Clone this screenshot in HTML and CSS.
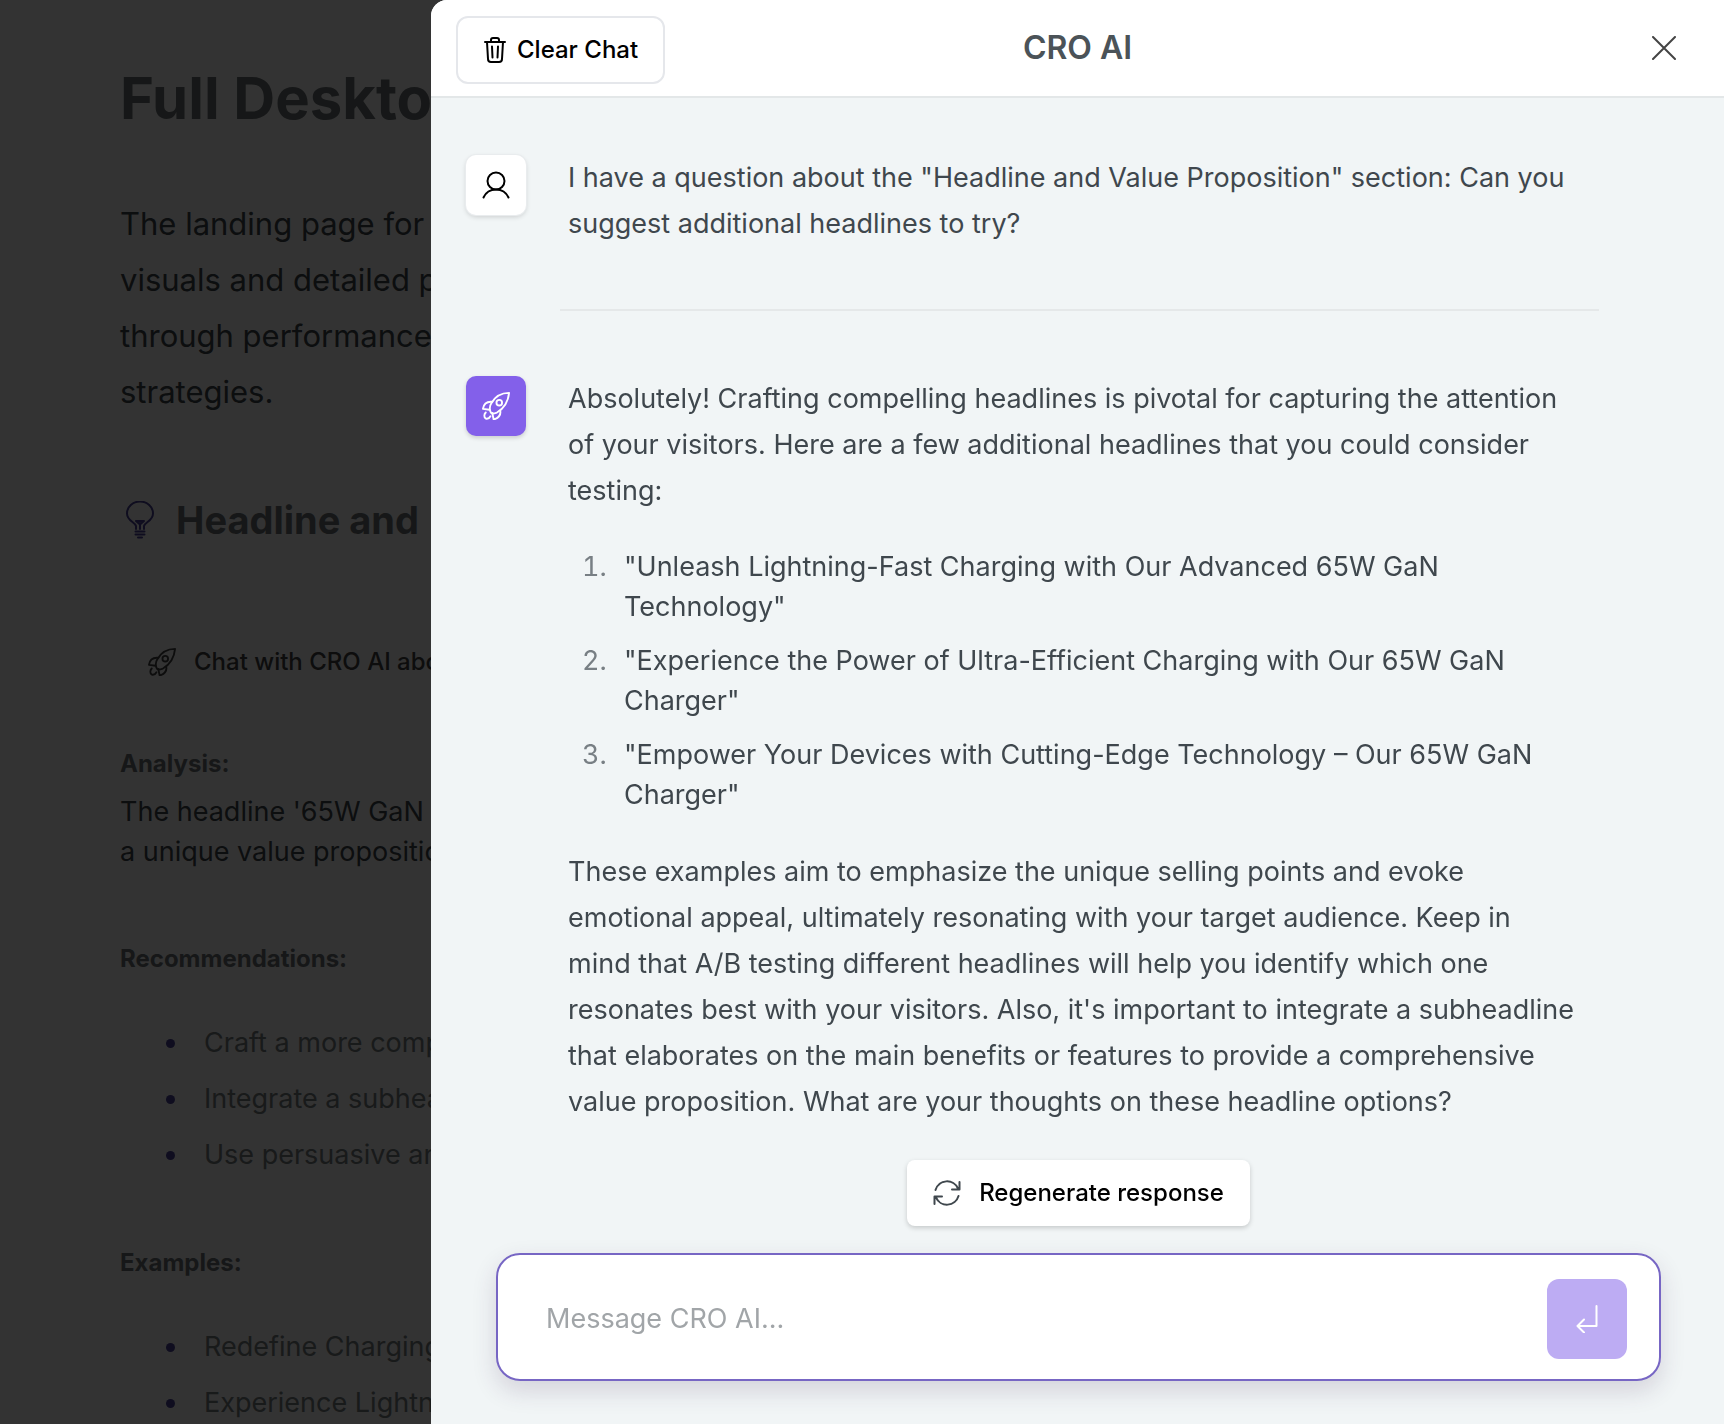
FILE: index.html
```html
<!DOCTYPE html>
<html lang="en">
<head>
<meta charset="utf-8">
<meta name="viewport" content="width=device-width, initial-scale=1">
<title>CRO AI</title>
<link rel="stylesheet" href="styles.css">
</head>
<body>
<svg class="sprite" aria-hidden="true">
  <symbol id="rocket" viewBox="1 1 30 30">
    <path d="M30 2C22 2 15 6 11 13c-2 3-2 6-1 9s4 2 7 1c7-4 12-11 13-21Z"/>
    <circle cx="19.500" cy="12.500" r="3"/>
    <path d="M12 11.500C7 11 3 13 2 19l7 1M20.500 21c1 5-2 8-7 9.500l-1.500-7M5 23c-2 2-2 5 0 6.500 2 .500 4-.500 5-2.500"/>
  </symbol>
</svg>

<main class="report">
  <h1 class="report-title">Full Desktop</h1>
  <p class="lead">The landing page for the<br>visuals and detailed product<br>through performance<br>strategies.</p>
  <h2 class="section-title">
    <svg class="bulb" viewBox="0 0 28 38" aria-hidden="true"><path d="M10 28v-3C9 21 1 20 1 12.500a13 12 0 0 1 26 0C27 20 19 21 18 25v3M10 20h8l-4 3.500zM14 22v6M9.500 30.500h9M9.500 33.500h9M12 36.500h4"/></svg>
    Headline and
  </h2>
  <button class="ask" type="button"><svg class="icon-md" aria-hidden="true"><use href="#rocket"/></svg>Chat with CRO AI about</button>
  <h3 class="label">Analysis:</h3>
  <p class="analysis">The headline '65W GaN<br>a unique value proposition</p>
  <h3 class="label">Recommendations:</h3>
  <ul class="points">
    <li>Craft a more compelling</li>
    <li>Integrate a subheadline</li>
    <li>Use persuasive and</li>
  </ul>
  <h3 class="label">Examples:</h3>
  <ul class="points">
    <li>Redefine Charging</li>
    <li>Experience Lightning</li>
  </ul>
</main>

<div class="overlay">
  <section class="panel" role="dialog" aria-labelledby="panel-title">
    <header class="panel-header">
      <button class="clear" type="button">
        <svg class="trash" viewBox="0 0 22 26" aria-hidden="true"><path d="M1 5h20M7 5V3q0-2 2-2h4q2 0 2 2v2M3 5l1 17q0 3 3 3h8q3 0 3-3l1-17M8 9.500l.500 11M14 9.500l-.500 11"/></svg>
        Clear Chat
      </button>
      <h2 class="panel-title" id="panel-title">CRO AI</h2>
      <button class="close" type="button" aria-label="Close"><svg viewBox="0 0 24 24" aria-hidden="true"><path d="M1 1l22 22M23 1L1 23"/></svg></button>
    </header>

    <div class="messages">
      <article class="message">
        <span class="avatar avatar-user"><svg viewBox="0 0 28 28" aria-hidden="true"><circle cx="14" cy="10" r="8.500"/><path d="M1.500 26.500C4 21 8.500 18.500 14 18.500S24 21 26.500 26.500"/></svg></span>
        <div class="text"><p>I have a question about the "Headline and Value Proposition" section: Can you suggest additional headlines to try?</p></div>
      </article>
      <hr class="divider">
      <article class="message">
        <span class="avatar avatar-ai"><svg aria-hidden="true"><use href="#rocket"/></svg></span>
        <div class="text">
          <p>Absolutely! Crafting compelling headlines is pivotal for capturing the attention of your visitors. Here are a few additional headlines that you could consider testing:</p>
          <ol>
            <li>"Unleash Lightning-Fast Charging with Our Advanced 65W GaN Technology"</li>
            <li>"Experience the Power of Ultra-Efficient Charging with Our 65W GaN Charger"</li>
            <li>"Empower Your Devices with Cutting-Edge Technology – Our 65W GaN Charger"</li>
          </ol>
          <p>These examples aim to emphasize the unique selling points and evoke emotional appeal, ultimately resonating with your target audience. Keep in mind&nbsp;that A/B testing different headlines will help you identify which one resonates best with your visitors. Also, it's important to integrate a subheadline that elaborates on the main benefits or features to provide a comprehensive value proposition. What are your thoughts on these headline options?</p>
        </div>
      </article>
    </div>

    <footer class="panel-footer">
      <button class="regenerate" type="button">
        <svg viewBox="0 0 28 28" aria-hidden="true"><path d="M2.500 11A12 12 0 0 1 25 9.500M26.500 3v7.500H19M25.500 17A12 12 0 0 1 3 18.500M1.500 25v-7.500H9"/></svg>
        Regenerate response
      </button>
      <form class="composer">
        <input class="field" type="text" placeholder="Message CRO AI..." aria-label="Message CRO AI">
        <button class="send" type="button" aria-label="Send"><svg viewBox="0 0 22 28" aria-hidden="true"><path d="M20.500 1v20H2M8 14.500L1.500 21 8 27.500"/></svg></button>
      </form>
    </footer>
  </section>
</div>
</body>
</html>
```
FILE: styles.css
```css
* { box-sizing: border-box; }
html, body { height: 100%; }
body {
  margin: 0;
  overflow: hidden;
  background: #fff;
  color: #3f474d;
  font-family: Inter, "Liberation Sans", sans-serif;
  font-size: 27px;
  line-height: 40px;
}
h1, h2, h3, p, ul, ol { margin: 0; padding: 0; }
button { border: 0; background: none; color: #000; font: inherit; font-weight: 500; }
svg { display: block; flex: none; fill: none; stroke: currentColor; stroke-width: 2; stroke-linecap: round; stroke-linejoin: round; }
.sprite { position: absolute; width: 0; height: 0; }

/* Report behind the dialog */
.report { padding: 60px 120px; white-space: nowrap; }
.report-title { color: #6f7678; font-size: 58px; line-height: 76px; }
.lead { margin-top: 60px; font-size: 31px; line-height: 56px; }
.section-title { display: flex; align-items: center; gap: 16px; margin-top: 76px; font-size: 38px; line-height: 48px; color: #6f7678; }
.bulb { width: 40px; height: 38px; color: #4a4499; }
.ask { display: flex; align-items: center; gap: 18px; margin-top: 90px; padding: 12px 28px; font-size: 24px; line-height: 32px; color: #444; }
.icon-md { width: 28px; height: 28px; }
.label { margin-top: 60px; font-size: 24px; line-height: 32px; color: #6f7678; }
.analysis { margin-top: 12px; }
.ask + .label { margin-top: 58px; }
.analysis + .label { margin-top: 71px; }
.points { margin-top: 40px; padding-left: 70px; line-height: 56px; color: #7a8084; }
.points li { padding-left: 14px; }
.points li::marker { color: #4a4499; }
.points + .label { margin-top: 64px; }

/* Dialog */
.overlay { position: fixed; inset: 0; display: flex; justify-content: flex-end; background: rgba(0, 0, 0, .8); }
.panel { display: flex; flex-direction: column; width: 75%; height: 100%; overflow: hidden; border-top-left-radius: 16px; background: #f1f5f6; }
.panel-header { display: grid; grid-template-columns: 1fr auto 1fr; align-items: center; padding: 0 25px; border-bottom: 2px solid #e3e7e8; background: #fff; }
.clear { display: flex; justify-self: start; align-items: center; gap: 10px; margin: 16px 0 12px; padding: 16px 25px; border: 2px solid #e5e7eb; border-radius: 12px; font-size: 24px; line-height: 32px; }
.trash { width: 24px; height: 26px; }
.panel-title { color: #4b5358; font-size: 32px; font-weight: 600; line-height: 40px; }
.close { justify-self: end; padding: 0 23px; color: #444; }
.close svg { width: 24px; height: 24px; }

.messages { flex: 1; padding: 57px 125px 0 35px; }
.message { display: flex; gap: 42px; padding-right: 12px; }
.avatar { display: grid; flex: none; place-items: center; width: 60px; height: 60px; border-radius: 10px; box-shadow: 0 2px 4px rgba(0, 0, 0, .16); }
.avatar svg { width: 28px; height: 28px; }
.avatar-user { background: #fff; box-shadow: 0 0 0 1px #e9ecee, 0 2px 5px rgba(0, 0, 0, .16); color: #000; }
.avatar-ai { background: #8360ea; color: #fff; }
.text p { line-height: 46px; }
.text ol { margin: 33px 0 34px; padding-left: 46px; }
.text li { padding-left: 10px; }
.text li + li { margin-top: 14px; }
.text li::marker { color: #787f84; }
.divider { height: 2px; margin: 62px 0 65px 94px; border: 0; background: #e5e8e9; }

.panel-footer { display: flex; flex-direction: column; align-items: center; gap: 27px; padding: 0 63px 43px 65px; }
.regenerate { display: flex; align-items: center; gap: 18px; padding: 16px 26px; border-radius: 8px; background: #fff; box-shadow: 0 2px 5px rgba(0, 0, 0, .18); font-size: 24px; line-height: 34px; }
.regenerate svg { width: 28px; height: 28px; color: #3f474d; }
.composer { display: flex; align-items: center; align-self: stretch; padding: 24px 32px 20px 48px; border: 2px solid #7766c4; border-radius: 24px; background: #fff; box-shadow: 0 10px 24px rgba(60, 40, 80, .16); }
.field { flex: 1; min-width: 0; padding: 0; border: 0; outline: 0; background: none; color: inherit; font: inherit; }
.field::placeholder { color: #a1a5a8; opacity: 1; }
.send { display: grid; place-items: center; width: 80px; height: 80px; padding: 0; border-radius: 12px; background: #bdacf3; color: #fff; }
.send svg { width: 22px; height: 28px; }
```
